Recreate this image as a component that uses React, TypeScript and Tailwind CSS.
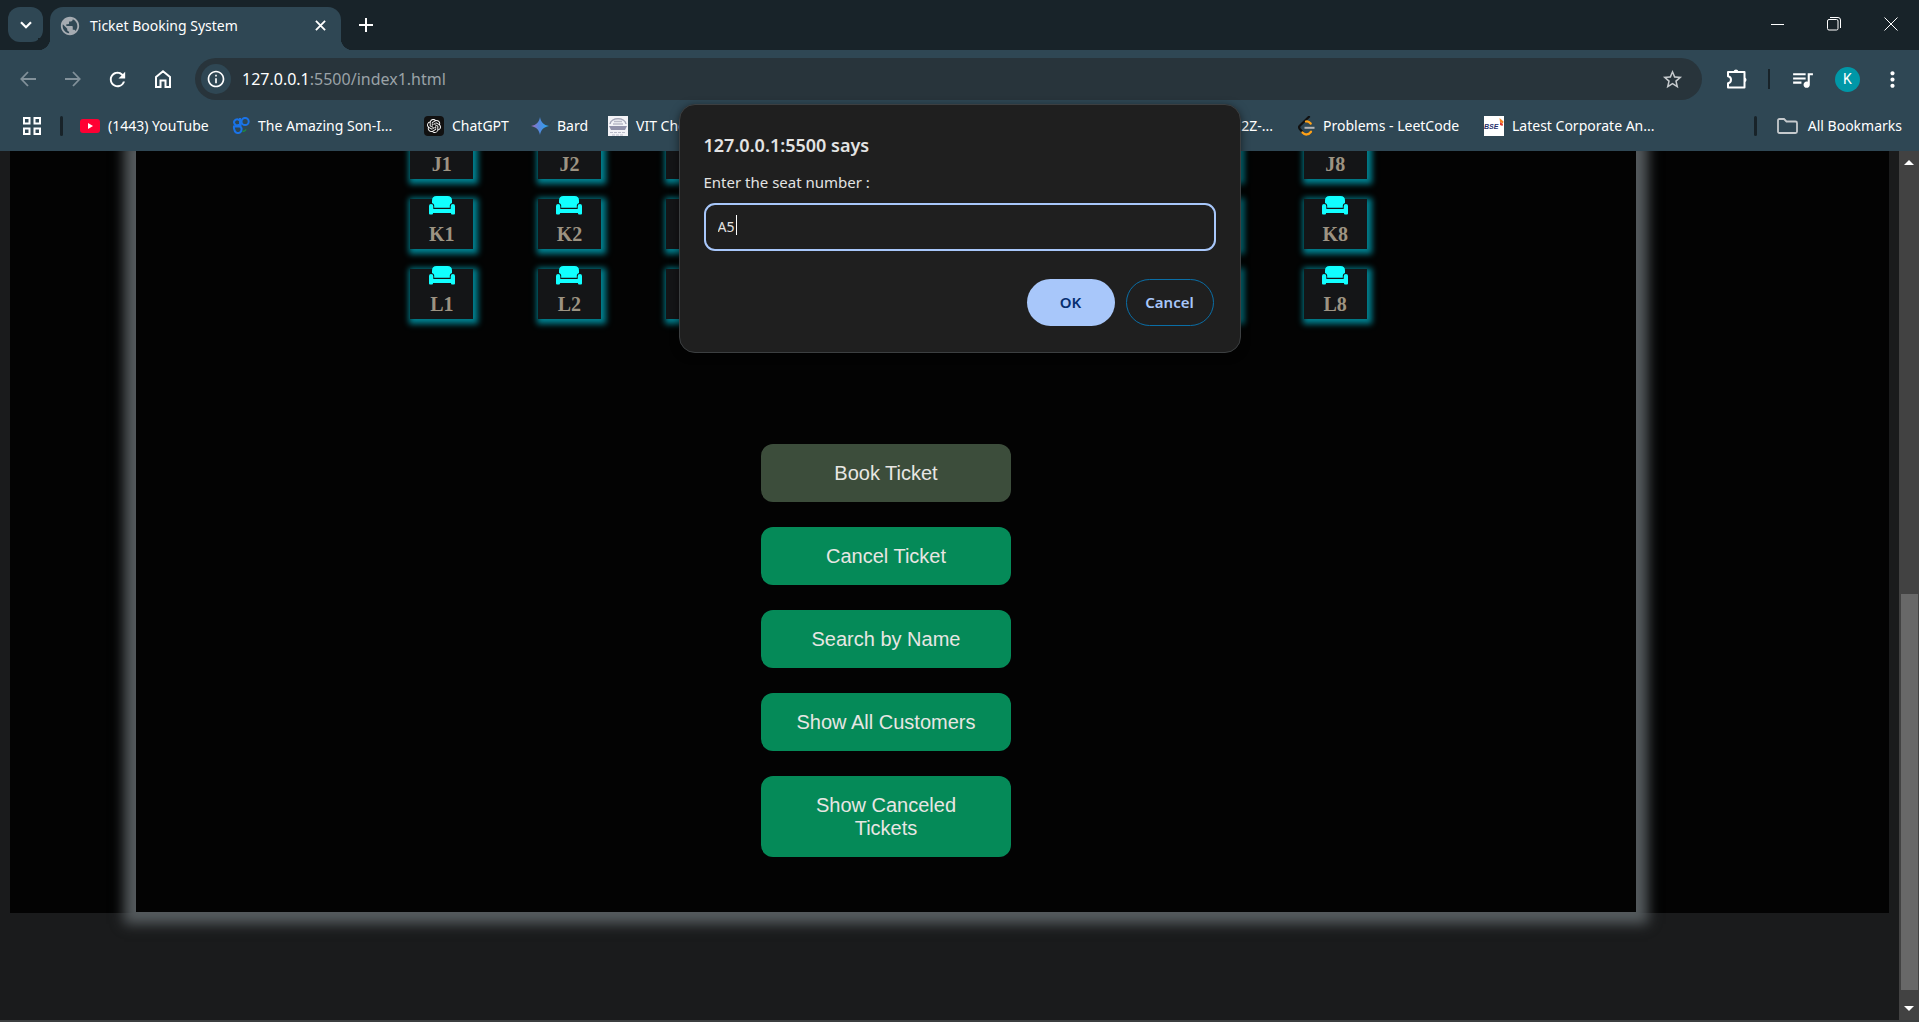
import React from "react";
import { MdPublic, MdQueueMusic, MdMoreVert, MdStarBorder, MdRefresh, MdInfoOutline } from "react-icons/md";
import { SiOpenai } from "react-icons/si";

const ui = "font-['Noto_Sans','Open_Sans',sans-serif]";
const iconButton = "flex size-[45px] shrink-0 items-center justify-center text-white";

function TabStrip() {
  return (
    <div className="flex h-[50px] items-end bg-[#182329] text-white">
      <button aria-label="Search tabs" className="mb-[8px] ml-2 flex size-[35px] shrink-0 items-center justify-center rounded-[12px] bg-[#2f4754]">
        <svg viewBox="0 0 12 8" className="h-2 w-3" fill="none" stroke="currentColor" strokeWidth="2.2"><path d="M1 1.2 6 6.2 11 1.2" /></svg>
      </button>
      <div className="relative ml-[7px] flex h-[43px] w-[291px] shrink-0 items-center rounded-t-[13px] bg-[#2f4754] pb-[6px] pl-[9px] pr-[15px]">
        <span className="absolute -left-3 bottom-0 size-3 bg-[radial-gradient(circle_at_0_0,#182329_12px,#2f4754_12.5px)]" />
        <span className="absolute -right-3 bottom-0 size-3 bg-[radial-gradient(circle_at_100%_0,#182329_12px,#2f4754_12.5px)]" />
        <MdPublic className="size-[22px] text-[#a5abb1]" />
        <span className="ml-[9px] flex-1 whitespace-nowrap text-[14px]">Ticket Booking System</span>
        <button aria-label="Close tab"><svg viewBox="0 0 12 12" className="size-[11px]" stroke="currentColor" strokeWidth="2"><path d="m1 1 10 10M11 1 1 11" /></svg></button>
      </div>
      <button aria-label="New tab" className="mb-[12px] ml-[12px] flex size-[26px] items-center justify-center">
        <svg viewBox="0 0 14 14" className="size-[14px]" stroke="currentColor" strokeWidth="2"><path d="M7 0v14M0 7h14" /></svg>
      </button>
      <div className="mb-[2px] ml-auto flex">
        <button aria-label="Minimize" className="flex h-12 w-[57px] items-center justify-center"><svg viewBox="0 0 13 13" className="size-[13px]" stroke="currentColor"><path d="M0 6.5h13" /></svg></button>
        <button aria-label="Restore" className="flex h-12 w-[56px] items-center justify-center"><svg viewBox="0 0 14 14" className="size-[14px]" fill="none" stroke="currentColor"><rect x=".5" y="2.5" width="10.5" height="10.5" rx="1.5" /><path d="M3 .5h8a2.5 2.5 0 0 1 2.5 2.5v8" /></svg></button>
        <button aria-label="Close" className="flex h-12 w-[57px] items-center justify-center"><svg viewBox="0 0 14 14" className="size-[14px]" stroke="currentColor"><path d="m.5.5 13 13M13.5.5l-13 13" /></svg></button>
      </div>
    </div>
  );
}

function Toolbar() {
  return (
    <div className="flex h-[58px] items-center pl-[5px] text-white">
      <button aria-label="Back" className={iconButton}><svg viewBox="0 0 16 16" className="size-4" fill="none" stroke="#82919a" strokeWidth="1.8"><path d="M16 8H1.500M8 1 1.300 8 8 15" /></svg></button>
      <button aria-label="Forward" className={iconButton}><svg viewBox="0 0 16 16" className="size-4" fill="none" stroke="#82919a" strokeWidth="1.8"><path d="M0 8h14.500M8 1l6.700 7L8 15" /></svg></button>
      <button aria-label="Reload" className={iconButton}><MdRefresh className="size-[23px]" /></button>
      <button aria-label="Home" className={iconButton}><svg viewBox="0 0 16 18" className="h-[18px] w-4" fill="none" stroke="currentColor" strokeWidth="2"><path d="M1 7 8 1.300 15 7v10h-4.500v-6.500h-5V17H1z" /></svg></button>
      <div className="ml-[10px] flex h-[42px] flex-1 items-center rounded-full bg-[#28343b] pl-[6px] pr-[18px]">
        <button aria-label="Site information" className="flex size-[30px] items-center justify-center rounded-full bg-[#2f4754]"><MdInfoOutline className="size-5" /></button>
        <div className="ml-[11px] flex-1 text-[16px]">127.0.0.1<span className="text-[#9aa2a7]">:5500/index1.html</span></div>
        <button aria-label="Bookmark this tab" className="text-[#c6cacd]"><MdStarBorder className="size-[23px]" /></button>
      </div>
      <button aria-label="Extensions" className="ml-6 shrink-0"><svg viewBox="0 0 22 22" className="size-[22px]" fill="none" stroke="currentColor" strokeWidth="2"><path d="M2 4h16.500v15.500H2v-4.300c4-.5 4-6.400 0-7z" strokeLinejoin="round" /><path d="M7.500 3.500a2.600 2.600 0 0 1 5 0zM19 9.500a2.500 2.500 0 0 1 0 4.600z" fill="currentColor" stroke="none" /></svg></button>
      <span className="ml-5 h-5 w-[2px] bg-[#182329]" />
      <button aria-label="Media controls" className="ml-5 shrink-0"><MdQueueMusic className="size-[25px]" /></button>
      <button aria-label="Profile K" className="ml-5 flex size-[25px] shrink-0 items-center justify-center rounded-full bg-[#0097a7] font-['Roboto',sans-serif] text-[14px]">K</button>
      <button aria-label="Menu" className="ml-5 mr-[14px] shrink-0"><MdMoreVert className="size-[25px]" /></button>
    </div>
  );
}

function GeeksIcon() {
  return (
    <svg viewBox="0 0 18 17" className="h-[17px] w-[18px]" fill="none" strokeWidth="2">
      <path stroke="#1a73e8" d="M7.500 3.500a3 3 0 1 0-1 4.500h3M8 1v6M9.500 4.500a3.600 3.600 0 1 0 7.200 0 3.600 3.600 0 1 0-7.200 0M1 9.500h6.500q2 0 2 2.500a3.500 3.500 0 0 1-7 1q-.8-1.500-.5-3.500" />
      <path stroke="#1e8e3e" strokeWidth="1.500" d="M10.500 14.500q2.500 0 3.500-2" />
    </svg>
  );
}

function GptIcon() {
  return <span className="flex size-5 items-center justify-center rounded bg-[#111]"><SiOpenai className="size-[14px] text-white" /></span>;
}

function SparkIcon() {
  return (
    <svg viewBox="0 0 18 18" className="size-[18px]">
      <defs><linearGradient id="spark" x1="0" x2="1"><stop stopColor="#b06ab8" /><stop offset=".4" stopColor="#5a86dc" /><stop offset="1" stopColor="#23a6f0" /></linearGradient></defs>
      <path fill="url(#spark)" d="M9 0c.8 5 3.500 8 9 9-5.500 1-8.200 4-9 9-.8-5-3.500-8-9-9 5.500-1 8.200-4 9-9z" />
    </svg>
  );
}

function VitIcon() {
  return (
    <svg viewBox="0 0 20 20" className="size-5">
      <path fill="#f3f3f7" d="M0 0h20v20H0z" />
      <path d="M2 8c1-7 15-7 16 0" stroke="#a5a7b8" fill="none" strokeWidth="1.500" />
      <path d="M6 5.500h8M5 8h10" stroke="#b9bac8" strokeWidth="1.500" />
      <path d="M1 10h18l-2 4H3z" fill="#9192aa" />
      <path d="M2 16.500h16M4 19h12" stroke="#b9bac8" strokeDasharray="3 1" />
    </svg>
  );
}

function LeetIcon() {
  return (
    <svg viewBox="0 0 17 20" className="h-5 w-[17px]" fill="none" strokeWidth="2.300">
      <path stroke="#111" d="M11 .8 1.800 9.800c-1 1-.8 2.200 0 3.200L4.500 16" strokeLinecap="round" />
      <path stroke="#ffa116" d="M8 5.500c2.500-.8 3.500.5 4.700 2M4.500 16.500c2.500 3 6 2.500 8.500-.8" strokeLinecap="round" />
      <path stroke="#b3b3b3" strokeWidth="2" d="M6.500 11.800h10" />
    </svg>
  );
}

function BseIcon() {
  return (
    <svg viewBox="0 0 20 20" className="size-5">
      <path fill="#fff" d="M0 0h20v20H0z" />
      <text x="0" y="13" fontSize="7" fontWeight="bold" fontStyle="italic" fill="#252f6b" fontFamily="Liberation Sans, sans-serif">BSE</text>
      <path fill="#f58220" d="m15.500 2 4 3.500-.5 2-3-1.500z" /><path fill="#e03a2f" d="m16 6 3 2-.5 2-2.500-1z" />
    </svg>
  );
}

function Bookmark({ icon, children, className = "" }: { icon?: React.ReactNode; children: React.ReactNode; className?: string }) {
  return (
    <a href="#" className={`flex shrink-0 items-center gap-2 whitespace-nowrap ${className}`}>
      {icon}
      <span>{children}</span>
    </a>
  );
}

function BookmarksBar() {
  return (
    <nav aria-label="Bookmarks" className="flex h-[43px] items-center pb-[8px] pl-[23px] pr-[17px] text-[14px] text-white">
      <svg viewBox="0 0 18 18" className="size-[18px]" fill="none" stroke="currentColor" strokeWidth="2"><path d="M1 1h5.500v5.500H1zM11.500 1H17v5.500h-5.500zM1 11.500h5.500V17H1zM11.500 11.500H17V17h-5.500z" /></svg>
      <span className="ml-[19px] h-5 w-[3px] rounded bg-[#182329]" />
      <Bookmark className="ml-[17px] w-[152px]" icon={<svg viewBox="0 0 20 14" className="h-[14px] w-5"><rect width="20" height="14" rx="3" fill="#f03" /><path d="M8 4v6l5-3z" fill="#fff" /></svg>}>(1443) YouTube</Bookmark>
      <Bookmark className="w-[192px]" icon={<GeeksIcon />}>The Amazing Son-I...</Bookmark>
      <Bookmark className="w-[107px]" icon={<GptIcon />}>ChatGPT</Bookmark>
      <Bookmark className="w-[77px]" icon={<SparkIcon />}>Bard</Bookmark>
      <Bookmark className="w-[500px]" icon={<VitIcon />}>VIT Che</Bookmark>
      <Bookmark className="w-[190px] justify-end pr-[25px]">2Z-...</Bookmark>
      <Bookmark className="w-[186px]" icon={<LeetIcon />}>Problems - LeetCode</Bookmark>
      <Bookmark icon={<BseIcon />}>Latest Corporate An...</Bookmark>
      <span className="ml-auto h-5 w-[3px] rounded bg-[#182329]" />
      <Bookmark className="ml-[19px] pl-px" icon={<svg viewBox="0 0 21 16" className="mr-[2px] h-4 w-[21px]" fill="none" stroke="#c6cacd" strokeWidth="1.8"><path d="M1 2.500Q1 1 2.500 1H7l2.500 2.500h9Q20 3.500 20 5v8.500q0 1.500-1.500 1.500h-16Q1 15 1 13.500z" /></svg>}>All Bookmarks</Bookmark>
    </nav>
  );
}

function SofaIcon() {
  return (
    <svg viewBox="0 0 26 19" className="-mt-[3px] h-[19px] w-[26px] shrink-0" fill="#1ff">
      <path d="M3 7V4.500Q3 0 7.500 0h11Q23 0 23 4.500V7q-2.200.5-2.200 2.500v2.200H5.200V9.500Q5.200 7.500 3 7z" />
      <path d="M2 8q2.300 0 2.300 2.300V13h17.400v-2.700Q21.700 8 24 8q2 0 2 2v7.500q0 1-1 1h-2q-1 0-1-1V17H4v.5q0 1-1 1H1q-1 0-1-1V10q0-2 2-2z" />
    </svg>
  );
}

function Seat({ label }: { label: string }) {
  return (
    <button className="flex h-[50px] w-[63px] flex-col items-center bg-[#141517] font-['Liberation_Serif',serif] text-[20px] leading-[22px] font-bold text-[#9d9382] shadow-[2px_2px_6px_3px_#00808f]">
      <SofaIcon />
      <span className="mt-2">{label}</span>
    </button>
  );
}

const rows = ["J", "K", "L"];
const columns = [1, 2, 3, 4, 5, 6, 7, 8];
const actions = ["Book Ticket", "Cancel Ticket", "Search by Name", "Show All Customers", "Show Canceled Tickets"];

function TicketPage() {
  return (
    <main className="min-w-0 flex-1 overflow-hidden px-[10px]">
      <div className="bg-[#030303] pr-[253px] pb-px pl-[126px]">
        <section className="flex flex-col items-center bg-[#030303] pb-[55px] shadow-[0_0_12px_12px_#555b5e]">
          <div className="-mt-[22px] ml-[5px] grid w-[1021px] grid-cols-8 justify-items-center gap-y-5">
            {rows.map((row) => columns.map((column) => <Seat key={row + column} label={row + column} />))}
          </div>
          <div className="mt-[125px] flex w-[250px] flex-col gap-[25px]">
            {actions.map((action, index) => (
              <button
                key={action}
                className={`rounded-[12px] px-[25px] pt-[18px] pb-[17px] font-['Liberation_Sans',sans-serif] text-[20px] leading-[23px] text-[#e8e6e3] ${index === 0 ? "bg-[#3c4d3b]" : "bg-[#058a58]"}`}
              >
                {action}
              </button>
            ))}
          </div>
        </section>
      </div>
    </main>
  );
}

function ScrollTrack() {
  return (
    <div className="flex w-5 shrink-0 flex-col items-center bg-[#424242]">
      <svg viewBox="0 0 10 5" className="mt-[9px] h-[5px] w-[10px]" fill="#fff"><path d="M5 0l5 5H0z" /></svg>
      <div className="mt-[429px] w-[17px] flex-1 bg-[#686868]" />
      <svg viewBox="0 0 10 5" className="mt-[16px] mb-[9px] h-[5px] w-[10px]" fill="#fff"><path d="M0 0h10L5 5z" /></svg>
    </div>
  );
}

function PromptDialog() {
  return (
    <div role="dialog" aria-labelledby="prompt-title" className="absolute top-[104px] left-1/2 flex w-[562px] -translate-x-1/2 flex-col rounded-[16px] border border-[#3c3f41] bg-[#1f1f1f] px-6 pt-[26px] pb-[26px] text-[#e3e3e3] shadow-[0_2px_8px_#0008]">
      <h2 id="prompt-title" className="text-[18px] leading-[28px] font-semibold">127.0.0.1:5500 says</h2>
      <label htmlFor="seat-number" className="mt-[12px] text-[15px] leading-[22px]">Enter the seat number :</label>
      <div className="relative mt-[10px] flex">
        <input id="seat-number" defaultValue="A5" className="h-[48px] w-full rounded-[11px] border-2 border-[#a8c7fa] bg-transparent px-3 pb-[2px] text-[14px] outline-none" />
        <span className="absolute top-[12px] left-8 h-5 w-px bg-white" />
      </div>
      <div className="mt-[28px] mr-[2px] flex justify-end gap-[11px] text-[15px] font-semibold">
        <button className="h-[47px] w-[88px] rounded-full bg-[#a8c7fa] text-[#062e6f]">OK</button>
        <button className="h-[47px] w-[88px] rounded-full border border-[#0a6ea6] text-[#a8c7fa]">Cancel</button>
      </div>
    </div>
  );
}

export default function App() {
  return (
    <div className={`relative flex h-screen flex-col overflow-hidden bg-[#1a1b1c] ${ui}`}>
      <TabStrip />
      <header className="shrink-0 bg-[#2f4754]">
        <Toolbar />
        <BookmarksBar />
      </header>
      <div className="flex min-h-0 flex-1">
        <TicketPage />
        <ScrollTrack />
      </div>
      <div className="h-[2px] shrink-0 bg-[#3c3f40]" />
      <PromptDialog />
    </div>
  );
}
